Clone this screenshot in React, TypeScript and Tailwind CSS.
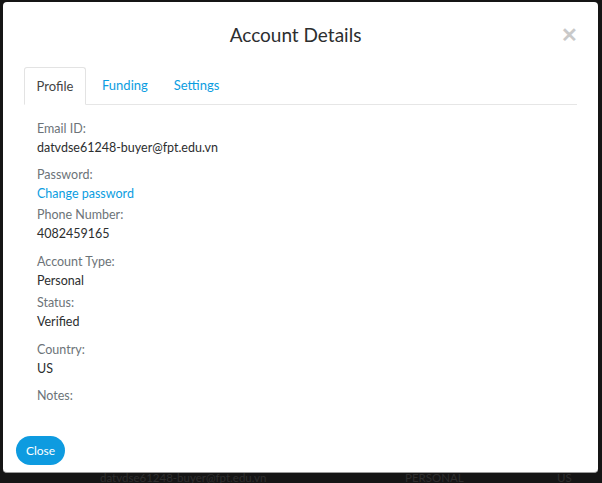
import React from 'react'

const fields: { label: string; value: string; link?: boolean; gap: string }[] = [
  { label: 'Email ID:', value: 'datvdse61248-buyer@fpt.edu.vn', gap: 'mt-0' },
  { label: 'Password:', value: 'Change password', link: true, gap: 'mt-[8px]' },
  { label: 'Phone Number:', value: '4082459165', gap: 'mt-[2px]' },
  { label: 'Account Type:', value: 'Personal', gap: 'mt-[9px]' },
  { label: 'Status:', value: 'Verified', gap: 'mt-[3px]' },
  { label: 'Country:', value: 'US', gap: 'mt-[9px]' },
]

export default function App() {
  return (
    <div className="w-[602px] h-[483px] overflow-hidden bg-[#151515] font-['Lato','Open_Sans',sans-serif]">
      <div className="ml-[3px] mt-[2px] w-[595px] h-[471px] bg-white rounded-[4px] border-b border-[#9a9a9a] flex flex-col">
        {/* Header */}
        <div className="relative h-[64px] flex items-center justify-center pt-[2px]">
          <h2 className="text-[19px] text-[#2c2e2f] -ml-[10px]">Account Details</h2>
          <span className="absolute right-[20px] top-[22px] text-[20px] leading-none font-bold text-[#c9c9c9]">✕</span>
        </div>

        {/* Tabs */}
        <div className="mx-[21px] mt-[1px] flex border-b border-[#e6e6e6] h-[38px]">
          <div className="w-[62px] -mb-px bg-white border border-b-white border-[#e3e3e3] rounded-t-[3px] flex items-center justify-center text-[13px] text-[#444] pt-[1px]">
            Profile
          </div>
          <div className="ml-[16px] flex items-center text-[13px] text-[#0b9de1] pt-[1px]">Funding</div>
          <div className="ml-[26px] flex items-center text-[13px] text-[#0b9de1] pt-[1px]">Settings</div>
        </div>

        {/* Fields */}
        <div className="ml-[34px] mt-[14px] flex flex-col text-[12.5px]">
          {fields.map((f) => (
            <div key={f.label} className={f.gap}>
              <div className="h-[19px] leading-[19px] text-[#6c7378]">{f.label}</div>
              <div className={`h-[19px] leading-[19px] ${f.link ? 'text-[#0b9de1]' : 'text-[#2c2e2f]'}`}>
                {f.value}
              </div>
            </div>
          ))}
          <div className="mt-[8px] h-[19px] leading-[19px] text-[#6c7378]">Notes:</div>
        </div>

        <div className="mt-auto mb-[7px] ml-[13px]">
          <button className="w-[49px] h-[29px] rounded-full bg-[#0e9be0] text-white text-[12px]">Close</button>
        </div>
      </div>

      {/* Backdrop content peeking below modal */}
      <div className="flex whitespace-nowrap text-[11.5px] leading-[12px] text-[#2e2e2e] -mt-[1px]">
        <span className="ml-[100px] w-[305px]">datvdse61248-buyer@fpt.edu.vn</span>
        <span className="w-[152px]">PERSONAL</span>
        <span>US</span>
      </div>
    </div>
  )
}
